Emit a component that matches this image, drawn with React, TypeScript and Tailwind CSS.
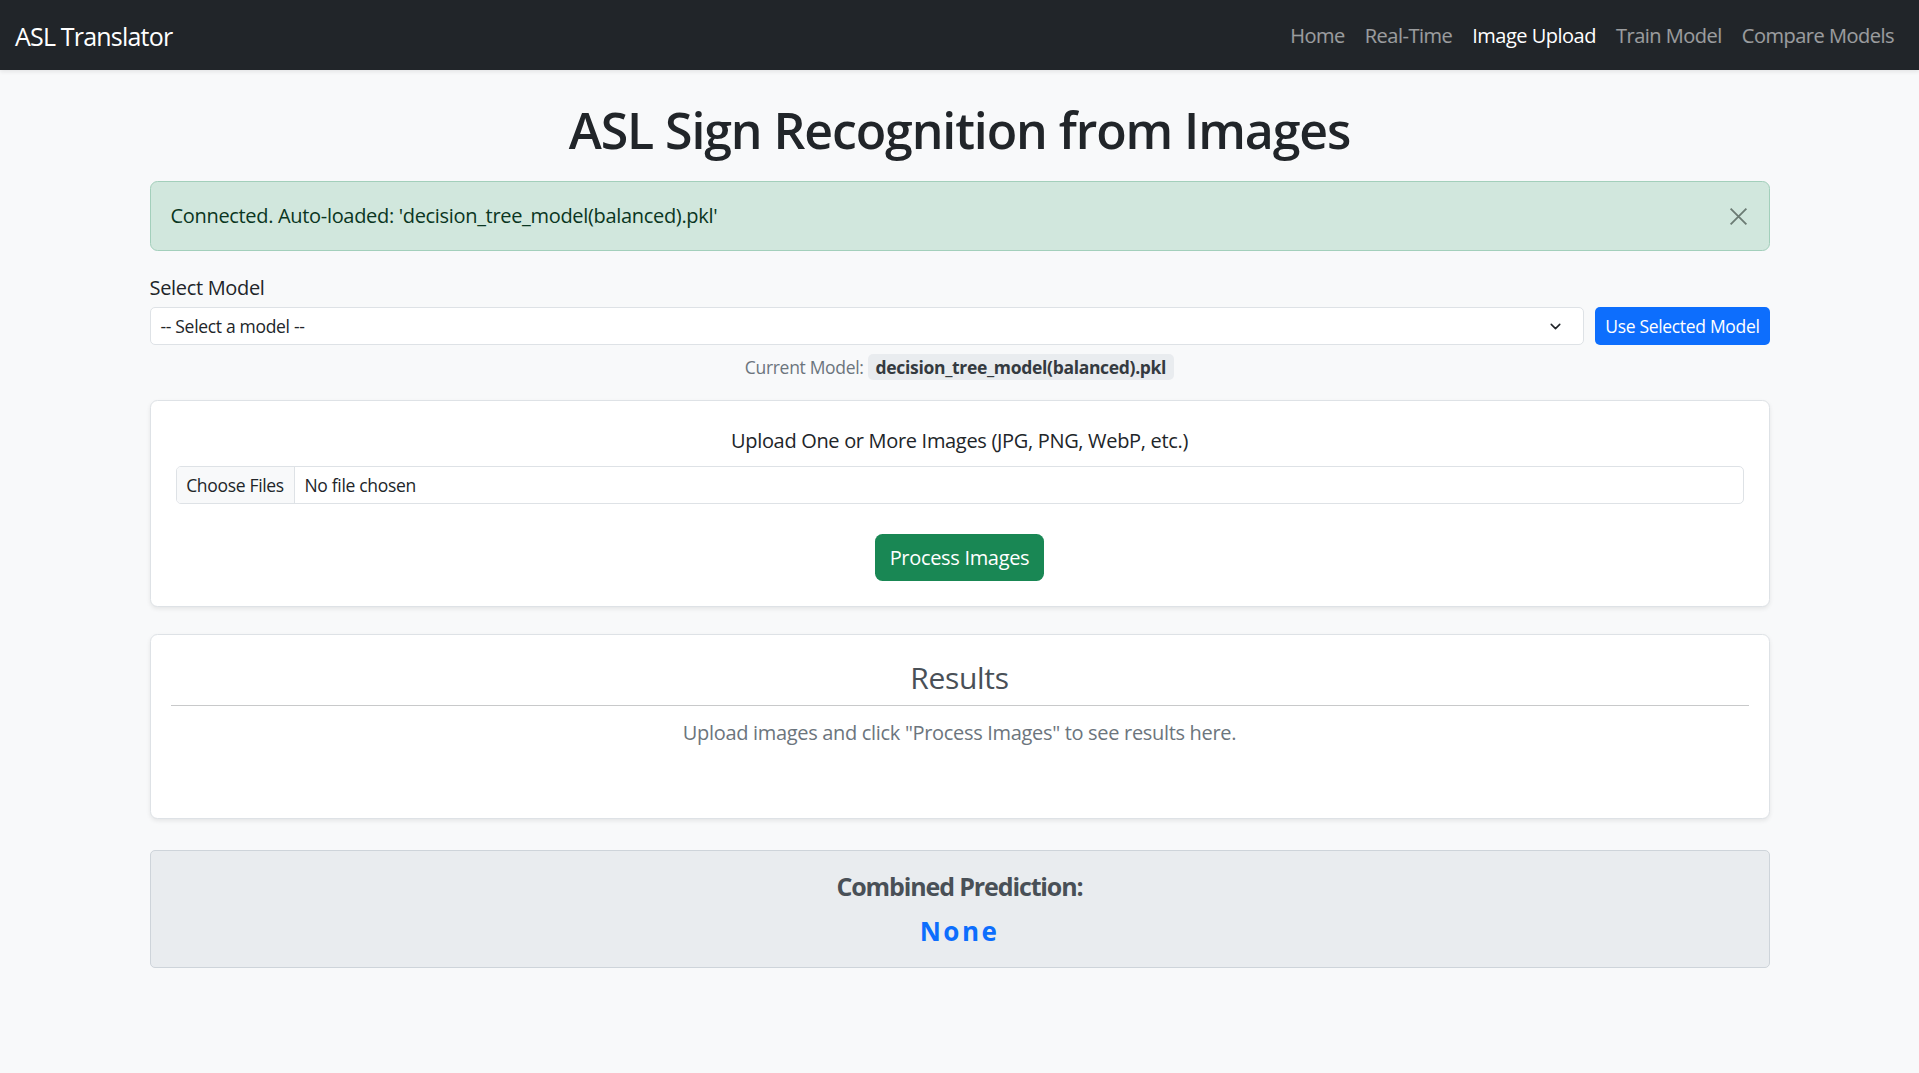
import { ChevronDown } from "lucide-react";

const navLinks = [
  { label: "Home", active: false },
  { label: "Real-Time", active: false },
  { label: "Image Upload", active: true },
  { label: "Train Model", active: false },
  { label: "Compare Models", active: false },
];

const Navbar = () => (
  <nav className="flex h-[70px] items-center justify-between bg-[#212529] px-[15px] shadow-[0_2px_4px_rgba(0,0,0,0.08)]">
    <span className="mt-[2px] text-[25px] leading-[36px] tracking-[-0.032em] text-white">
      ASL Translator
    </span>
    <ul className="mt-[2px] flex items-center">
      {navLinks.map((link) => (
        <li key={link.label}>
          <a
            href="#"
            className={`block px-[10px] text-[20px] leading-[30px] tracking-[-0.025em] ${
              link.active ? "text-white" : "text-white/55"
            }`}
          >
            {link.label}
          </a>
        </li>
      ))}
    </ul>
  </nav>
);

const CloseIcon = () => (
  <svg width="21" height="21" viewBox="0 0 16 16" fill="none">
    <path d="M2 2l12 12M14 2L2 14" stroke="currentColor" strokeWidth="1.4" />
  </svg>
);

const App = () => {
  return (
    <div className="min-h-screen bg-[#f8f9fa] font-['Open_Sans',sans-serif] tracking-[-0.02em] text-[#212529]">
      <Navbar />

      <main className="mx-auto w-[1620px] pb-10">
        <h1 className="mt-[30px] mb-[21px] text-center text-[50px] font-semibold leading-[60px] tracking-[-0.022em]">
          ASL Sign Recognition from Images
        </h1>

        {/* Alert */}
        <div className="relative mb-[22px] flex h-[70px] items-center rounded-[7.5px] border border-[#a3cfbb] bg-[#d1e7dd] px-[20px] text-[20px] text-[#0a3622]">
          Connected. Auto-loaded: 'decision_tree_model(balanced).pkl'
          <button className="absolute right-[20px] top-[24px] text-[#6b7b73]">
            <CloseIcon />
          </button>
        </div>

        {/* Model select */}
        <label className="mb-[4px] block text-[20px] leading-[30px]">Select Model</label>
        <div className="flex gap-[11px]">
          <div className="flex h-[38px] flex-1 items-center justify-between rounded-[5px] border border-[#dee2e6] bg-white pl-[10px] pr-[19px] text-[17.5px]">
            <span>-- Select a model --</span>
            <ChevronDown size={17} strokeWidth={2.2} />
          </div>
          <button className="h-[38px] rounded-[5px] bg-[#0d6efd] px-[10px] text-[17.5px] text-white">
            Use Selected Model
          </button>
        </div>
        <div className="mt-[9px] flex items-center justify-center gap-[4px] text-[17.5px]">
          <span className="text-[#6c757d]">Current Model:</span>
          <span className="rounded-[5px] bg-[#e9ecef] px-[8px] leading-[26px] font-bold text-[#343a40]">
            decision_tree_model(balanced).pkl
          </span>
        </div>

        {/* Upload card */}
        <section className="mt-[20px] rounded-[7.5px] border border-[#dee2e6] bg-white p-[25px] shadow-[0_2px_4px_rgba(0,0,0,0.08)]">
          <p className="mb-[10px] text-center text-[20px] leading-[30px]">
            Upload One or More Images (JPG, PNG, WebP, etc.)
          </p>
          <div className="flex h-[38px] overflow-hidden rounded-[5px] border border-[#dee2e6] text-[17.5px]">
            <span className="flex w-[118px] items-center justify-center border-r border-[#dee2e6] bg-[#f8f9fa]">
              Choose Files
            </span>
            <span className="flex items-center pl-[10px]">No file chosen</span>
          </div>
          <div className="mt-[30px] flex justify-center">
            <button className="h-[47px] rounded-[7.5px] bg-[#198754] px-[15px] text-[20px] text-white">
              Process Images
            </button>
          </div>
        </section>

        {/* Results */}
        <section className="mt-[27px] rounded-[7.5px] border border-[#dee2e6] bg-white px-[20px] pt-[25px] pb-[70px] shadow-[0_2px_4px_rgba(0,0,0,0.08)]">
          <h4 className="mb-[9px] text-center text-[30px] font-medium leading-[36px] text-[#495057]">
            Results
          </h4>
          <hr className="border-t border-[#c8c9ca]" />
          <p className="mt-[12px] text-center text-[20px] leading-[30px] text-[#6c757d]">
            Upload images and click "Process Images" to see results here.
          </p>
        </section>

        {/* Combined prediction */}
        <section className="mt-[31px] rounded-[5px] border border-[#ced4da] bg-[#e9ecef] p-[20px] pb-[21px] text-center">
          <h5 className="mb-[15px] text-[25px] font-bold leading-[30px] tracking-[-0.045em] text-[#495057]">
            Combined Prediction:
          </h5>
          <div className="text-[26px] font-bold leading-[30px] tracking-[2.5px] text-[#0d6efd]">
            None
          </div>
        </section>
      </main>
    </div>
  );
};

export default App;
